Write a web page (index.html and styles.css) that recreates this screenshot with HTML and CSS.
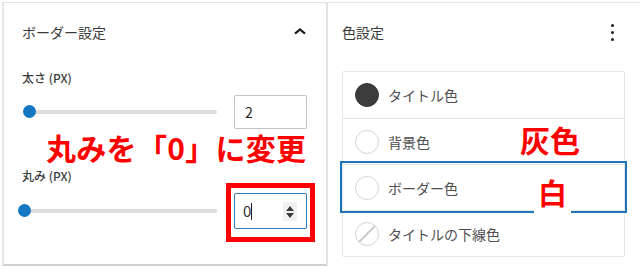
FILE: index.html
```html
<!DOCTYPE html>
<html lang="ja">
<head>
<meta charset="utf-8">
<link rel="stylesheet" href="styles.css">
</head>
<body>
<div class="page">
  <section class="panel-left">
    <div class="head">
      <span class="title">ボーダー設定</span>
      <svg class="chev" width="24" height="24" viewBox="0 0 24 24"><path d="M7 13.6L12 9.4l5 4.2" fill="none" stroke="#1e1e1e" stroke-width="2.2"/></svg>
    </div>
    <div class="field first">
      <div class="label">太さ (PX)</div>
      <div class="ctrl">
        <div class="slider s1"><span class="track"></span><span class="thumb"></span></div>
        <div class="num">2</div>
      </div>
    </div>
    <div class="field second">
      <div class="label">丸み (PX)</div>
      <div class="ctrl">
        <div class="slider s2"><span class="track"></span><span class="thumb"></span></div>
        <div class="num focus"><span class="val">0</span><span class="caret"></span>
          <span class="spin"><svg width="10" height="14" viewBox="0 0 10 14"><path d="M5 1L9 6H1z M5 13L1 8h8z" fill="#3c3c3c"/></svg></span>
        </div>
      </div>
    </div>
    <div class="note-main">丸みを「0」に変更</div>
    <div class="redbox"></div>
  </section>
  <section class="panel-right">
    <div class="head">
      <span class="title">色設定</span>
      <span class="dots"><i></i><i></i><i></i></span>
    </div>
    <div class="card">
      <div class="row"><span class="dot filled"></span><span>タイトル色</span></div>
      <div class="row"><span class="dot"></span><span>背景色</span></div>
      <div class="row selected"><span class="dot"></span><span>ボーダー色</span></div>
      <div class="row"><span class="dot none"></span><span>タイトルの下線色</span></div>
    </div>
    <div class="note n-gray">灰色</div>
    <div class="note n-white">白</div>
  </section>
</div>
</body>
</html>
```
FILE: styles.css
```css
* { box-sizing: border-box; }
html, body { margin: 0; padding: 0; background: #fff; }
body {
  width: 640px; height: 267px; overflow: hidden;
  font-family: "Noto Sans CJK JP", "Noto Sans", sans-serif;
  color: #333;
}
.page {
  position: relative;
  display: flex;
  padding: 2px 0 0 2px;
  height: 267px;
}
.panel-left {
  position: relative;
  width: 325px;
  height: 264px;
  border: 1px solid #e2e2e2;
  border-left: 2px solid #e6e6e6;
  border-bottom: 2px solid #cfcfcf;
  background: #fff;
}
.head {
  display: flex;
  justify-content: space-between;
  align-items: center;
  height: 20px;
  margin-top: 19px;
}
.panel-left .head { padding: 0 14px 0 18px; }
.title { font-size: 14px; line-height: 20px; color: #3a3a3a; }
.chev { display: block; }
.field { padding-left: 18px; }
.field.first { margin-top: 28px; }
.field.second { margin-top: 39px; }
.label { font-size: 12px; line-height: 16px; color: #3c3c3c; font-weight: 500; }
.ctrl {
  display: flex;
  align-items: center;
  margin-top: 9px;
  gap: 17px;
}
.slider { position: relative; width: 195px; height: 14px; }
.track {
  position: absolute; left: 2px; right: 0; top: 5px; height: 4px;
  background: #dddddd; border-radius: 2px;
}
.thumb {
  position: absolute; top: 0; width: 13px; height: 13px; border-radius: 50%;
  background: #1677c3;
}
.s1 .thumb { left: 1px; }
.s2 .thumb { left: -4px; }
.num {
  position: relative;
  width: 73px; height: 34px;
  border: 1px solid #c3c3c3;
  border-radius: 2px;
  font-size: 14px; line-height: 32px;
  padding-left: 10px;
  color: #222;
}
.num.focus {
  height: 36px; line-height: 34px;
  border: 1.5px solid #2f7fbf;
  padding-left: 8px;
  display: flex; align-items: center;
}
.val { font-size: 15px; color: #333; }
.caret { display: inline-block; width: 1px; height: 17px; background: #222; }
.spin {
  position: absolute; right: 9px; top: 8px;
  width: 14px; height: 19px; background: #f0f0f0;
  display: flex; align-items: center; justify-content: center;
}
.spin svg { display: block; }
.note-main {
  position: absolute; left: 42px; top: 127px;
  font-size: 30px; line-height: 34px; font-weight: 700; color: #ff0000;
  letter-spacing: 0.3px;
}
.redbox {
  position: absolute; left: 222px; top: 180px;
  width: 89px; height: 59px;
  border: 5px solid #ff0000;
}
.panel-right {
  position: relative;
  flex: 1;
  height: 265px;
  border-top: 1px solid #e6e6e6;
  border-left: 1px solid #e6e6e6;
  padding-left: 14px;
}
.panel-right .head { padding-right: 26px; }
.dots { display: flex; flex-direction: column; gap: 4px; }
.dots i { display: block; width: 3px; height: 3px; border-radius: 50%; background: #1e1e1e; }
.card {
  margin-top: 29px;
  width: 283px;
  border: 1px solid #e6e6e6;
  border-radius: 2px;
}
.row {
  display: flex; align-items: center;
  height: 46px;
  padding-left: 12px;
  gap: 9px;
  font-size: 14px; color: #505050;
  border-top: 1px solid #e6e6e6;
}
.row:first-child { border-top: 0; }
.row.selected { outline: 2px solid #1f75bb; outline-offset: 1px; position: relative; }
.dot {
  width: 24px; height: 24px; border-radius: 50%;
  border: 1px solid #d4d4d4; background: #fff;
  flex: none;
}
.dot.filled { background: #3b3b3b; border-color: #3b3b3b; }
.dot.none {
  background: linear-gradient(135deg, transparent 47%, #cfcfcf 47%, #cfcfcf 53%, transparent 53%);
}
.note {
  position: absolute;
  font-weight: 700; color: #ff0000; line-height: 1;
}
.n-gray { left: 192px; top: 121px; font-size: 30px; }
.n-white {
  left: 206px; top: 174px; width: 37px; height: 41px;
  font-size: 29px; background: #fff; text-align: center;
  padding-top: 1px;
  z-index: 2;
}
```
